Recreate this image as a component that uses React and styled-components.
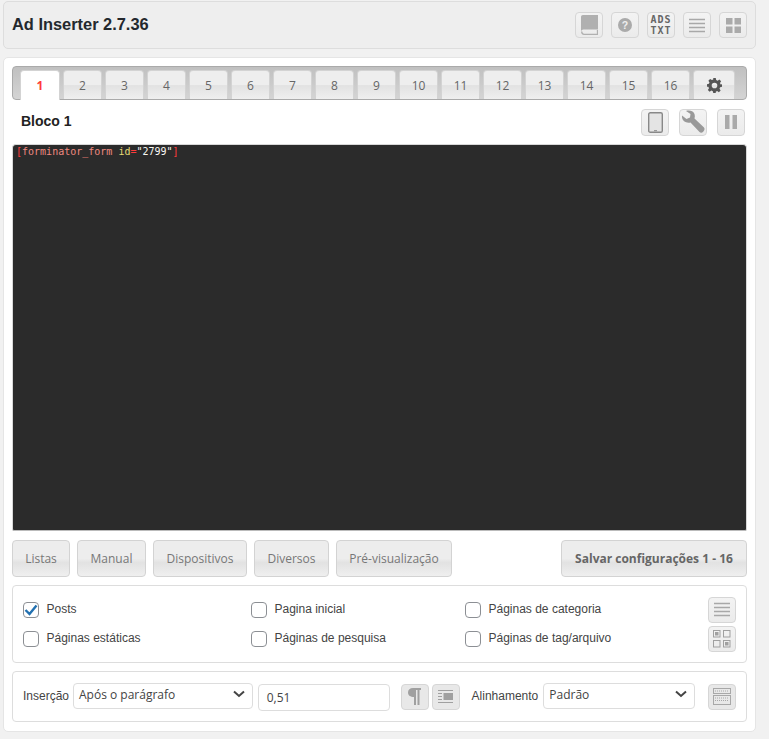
import React from "react";
import styled, { createGlobalStyle } from "styled-components";

const GlobalStyle = createGlobalStyle`
  html, body {
    margin: 0;
    padding: 0;
    background: #f1f1f1;
    font-family: "Liberation Sans", Arial, sans-serif;
    font-size: 12px;
    color: #444;
  }
`;

const Page = styled.div`
  width: 769px;
  height: 739px;
  padding: 1px 13px 0 3px;
  box-sizing: border-box;
  display: flex;
  flex-direction: column;
  gap: 8px;
`;

const Header = styled.header`
  height: 48px;
  box-sizing: border-box;
  background: #eee;
  border: 1px solid #ddd;
  border-radius: 5px;
  display: flex;
  align-items: center;
  justify-content: space-between;
  padding: 0 8px;
`;

const Title = styled.h1`
  margin: 0 0 1px 0;
  font-size: 16.4px;
  font-weight: 700;
  color: #23282d;
`;

const IconRow = styled.div`
  display: flex;
  align-items: center;
  gap: ${(p) => p.$gap || 8}px;
  margin-left: ${(p) => p.$ml || 0}px;
`;

const IconButton = styled.div`
  width: ${(p) => p.$w || 28}px;
  height: ${(p) => p.$h || 26}px;
  margin-left: ${(p) => p.$ml || 0}px;
  box-sizing: border-box;
  border: 1px solid #d6d6d6;
  border-radius: 4px;
  background: ${(p) => p.$fill || "linear-gradient(to bottom, #f3f3f3, #ebebeb)"};
  display: flex;
  align-items: center;
  justify-content: center;
`;

const Main = styled.main`
  height: 675px;
  box-sizing: border-box;
  background: #fff;
  border: 1px solid #e5e5e5;
  border-radius: 5px;
  padding: 8px 8px 0 8px;
`;

const TabBar = styled.div`
  height: 34px;
  box-sizing: border-box;
  border: 1px solid #aaa;
  border-radius: 4px;
  background: linear-gradient(to bottom, #c0c0c0 0, #d4d4d4 100%);
  display: flex;
  align-items: flex-end;
  gap: 3px;
  padding: 0 0 0 7px;
`;

const Tab = styled.div`
  width: ${(p) => p.$w || 39}px;
  height: ${(p) => (p.$active ? 30 : 29)}px;
  margin-bottom: ${(p) => (p.$active ? -1 : 0)}px;
  box-sizing: border-box;
  border: 1px solid #d3d3d3;
  border-bottom: none;
  border-radius: 4px 4px 0 0;
  background: ${(p) =>
    p.$active
      ? "#fff"
      : "linear-gradient(to bottom, #eeeeee 0, #eeeeee 50%, #e2e2e2 52%, #efefef 100%)"};
  color: ${(p) => (p.$active ? "#ff3a3a" : "#666")};
  font-family: "Open Sans", sans-serif;
  font-weight: ${(p) => (p.$active ? 700 : 400)};
  font-size: 12px;
  display: flex;
  align-items: center;
  justify-content: center;
`;

const BlockRow = styled.div`
  height: 44px;
  display: flex;
  align-items: center;
  justify-content: space-between;
  padding: 0 2px 0 9px;
`;

const BlockTitle = styled.h2`
  margin: 0 0 2px 0;
  font-size: 14px;
  font-weight: 700;
  color: #222;
`;

const Editor = styled.pre`
  margin: 0;
  height: 387px;
  box-sizing: border-box;
  background: #2b2b2b;
  border: 1px solid #d8d8d8;
  border-bottom-color: #bbb;
  border-radius: 4px 4px 2px 2px;
  padding: 0 0 0 3px;
  font-family: "DejaVu Sans Mono", monospace;
  font-size: 10px;
  line-height: 13px;
  color: #f8f8f2;
`;

const Tag = styled.span`
  color: ${(p) => p.$c};
`;

const ActionRow = styled.div`
  display: flex;
  gap: 7px;
  margin-top: 9px;
`;

const ActionButton = styled.div`
  height: 37px;
  width: ${(p) => p.$w}px;
  box-sizing: border-box;
  border: 1px solid #d3d3d3;
  border-radius: 4px;
  background: linear-gradient(to bottom, #ededed 0, #ededed 50%, #e2e2e2 62%, #efefef 100%);
  font-family: "Open Sans", sans-serif;
  font-size: 12px;
  font-weight: ${(p) => (p.$bold ? 700 : 400)};
  color: #777;
  display: flex;
  align-items: center;
  justify-content: center;
`;

const SaveButton = styled(ActionButton)`
  margin-left: auto;
  color: #666;
`;

const Box = styled.section`
  box-sizing: border-box;
  height: ${(p) => p.$h}px;
  margin-top: 8px;
  border: 1px solid #ddd;
  border-radius: 4px;
  display: flex;
  align-items: center;
  padding: 0 10px;
`;

const CheckGrid = styled.div`
  display: grid;
  grid-template-columns: 228px 214px 243px;
  grid-auto-rows: 29px;
  align-items: center;
  flex: none;
`;

const Check = styled.label`
  display: flex;
  align-items: center;
  gap: 7.5px;
  font-size: 12px;
  color: #444;
`;

const CheckText = styled.span`
  margin-bottom: 2px;
`;

const CheckBox = styled.span`
  width: 16px;
  height: 16px;
  box-sizing: border-box;
  border: 1px solid #8c8f94;
  border-radius: 4px;
  background: #fff;
  display: flex;
  align-items: center;
  justify-content: center;
`;

const SideIcons = styled.div`
  display: flex;
  flex-direction: column;
  gap: 3px;
`;

const FieldLabel = styled.span`
  font-size: 12px;
  color: #444;
  margin-left: ${(p) => p.$ml || 0}px;
  margin-right: ${(p) => p.$mr || 4}px;
  margin-bottom: 2px;
`;

const Select = styled.div`
  width: ${(p) => p.$w}px;
  height: 26px;
  margin-bottom: 2px;
  box-sizing: border-box;
  border: 1px solid #ddd;
  border-radius: 4px;
  background: #fff;
  padding: 0 7px 3px 5px;
  display: flex;
  align-items: center;
  justify-content: space-between;
  font-family: "Open Sans", sans-serif;
  font-size: 12px;
  color: #444;
`;

const TextInput = styled.div`
  width: 132px;
  height: 27px;
  margin: 1px 0 0 5px;
  box-sizing: border-box;
  border: 1px solid #ddd;
  border-radius: 4px;
  padding: 0 8px;
  display: flex;
  align-items: center;
  font-family: "Open Sans", sans-serif;
  font-size: 12px;
  color: #444;
`;

const Chevron = () => (
  <svg width="12" height="8" viewBox="0 0 12 8">
    <path d="M1 1.5 L6 6 L11 1.5" fill="none" stroke="#444" strokeWidth="2" />
  </svg>
);

const BookIcon = () => (
  <svg width="17" height="20" viewBox="0 0 17 20">
    <path d="M0 17V2C0 .8 .8 0 2 0H17V14.5H2.5C1 14.5 0 15.5 0 17Z" fill="#b0b0b0" />
    <path d="M.7 16.5C.7 18 1.6 19.3 3 19.3H16.5V15" fill="none" stroke="#b0b0b0" strokeWidth="1.3" />
  </svg>
);

const HelpIcon = () => (
  <svg width="14" height="14" viewBox="0 0 14 14">
    <circle cx="7" cy="7" r="7" fill="#aaa" />
    <text x="7" y="11" textAnchor="middle" fontSize="10.5" fontWeight="700" fontFamily="Liberation Sans" fill="#eee">?</text>
  </svg>
);

const ListIcon = () => (
  <svg width="16" height="15" viewBox="0 0 16 15">
    <path d="M0 1.5H16M0 5.5H16M0 9.5H16M0 13.5H16" stroke="#a8a8a8" strokeWidth="1.6" />
  </svg>
);

const GridIcon = () => (
  <svg width="15" height="15" viewBox="0 0 15 15">
    <path d="M0 0H6.5V6.5H0ZM8.5 0H15V6.5H8.5ZM0 8.5H6.5V15H0ZM8.5 8.5H15V15H8.5Z" fill="#aaa" />
  </svg>
);

const AdsTxt = styled.div`
  font-family: "DejaVu Sans Mono", monospace;
  font-size: 10px;
  font-weight: 700;
  line-height: 11px;
  letter-spacing: 1px;
  text-align: center;
  color: #666;
`;

const TabletIcon = () => (
  <svg width="15" height="21" viewBox="0 0 15 21">
    <rect x="0.7" y="0.7" width="13.6" height="19.6" rx="1.6" fill="#e4e4e4" stroke="#888" strokeWidth="1.4" />
    <path d="M6 18.7H9" stroke="#888" />
  </svg>
);

const WrenchIcon = () => (
  <svg width="24" height="24" viewBox="0 0 24 24">
    <path d="M1 5.5 L5.5 9 L9 7.5 L9.5 4 L5 1 C8 0 12 .5 13.5 4 C14 5.5 14 7 13.5 8.5 L23 17.5 C24 18.8 23.5 20.5 22 22 C20.8 23 19.5 23 18.5 22 L9.5 12.5 C7 13 3.5 12.5 2 10 C1.2 8.5 .8 7 1 5.5Z" fill="#999" />
  </svg>
);

const PauseIcon = () => (
  <svg width="12" height="14" viewBox="0 0 12 14">
    <path d="M0 0H4.5V14H0ZM7.5 0H12V14H7.5Z" fill="#aaa" />
  </svg>
);

const GearIcon = () => (
  <svg width="15" height="15" viewBox="0 0 24 24">
    <path
      fillRule="evenodd"
      d="M10 0H14L14.7 3.2L17 4.2L19.8 2.4L22.6 5.2L20.8 8L21.8 10.3L24 10V14L21 14.7L20 17L21.8 19.8L19 22.6L16.2 20.8L14 21.8L14 24H10L9.3 21L7 20L4.2 21.8L1.4 19L3.2 16.2L2.2 14L0 14V10L3 9.3L4 7L2.2 4.2L5 1.4L7.8 3.2L10 2.2ZM12 7.5A4.5 4.5 0 1 0 12 16.5A4.5 4.5 0 1 0 12 7.5Z"
      fill="#555"
    />
  </svg>
);

const MatrixIcon = () => (
  <svg width="18" height="18" viewBox="0 0 18 18">
    <g fill="none" stroke="#a0a0a0">
      <rect x="0.5" y="0.5" width="6.5" height="6.5" />
      <rect x="10.5" y="0.5" width="6.5" height="6.5" />
      <rect x="0.5" y="10.5" width="6.5" height="6.5" />
      <rect x="10.5" y="10.5" width="6.5" height="6.5" />
      <rect x="2.5" y="2.5" width="2.5" height="2.5" fill="#a0a0a0" />
      <rect x="12.5" y="12.5" width="2.5" height="2.5" fill="#a0a0a0" />
    </g>
  </svg>
);

const ParagraphIcon = () => (
  <svg width="13" height="17" viewBox="0 0 13 17">
    <path d="M5 0H13V2H11.5V17H9.5V2H8V17H6V9C2.5 9 0 7.5 0 4.5C0 1.5 2 0 5 0Z" fill="#a0a0a0" />
  </svg>
);

const IndentIcon = () => (
  <svg width="15" height="13" viewBox="0 0 15 13">
    <path d="M0 .5H15M0 12.5H15M0 3.5H4M0 6.5H4M0 9.5H4" stroke="#a0a0a0" />
    <rect x="5.5" y="3" width="9.5" height="7" fill="#a0a0a0" />
  </svg>
);

const KeyboardIcon = () => (
  <svg width="18" height="17" viewBox="0 0 18 17">
    <g fill="none" stroke="#a8a8a8">
      <rect x="0.5" y="0.5" width="17" height="5" />
      <rect x="0.5" y="7.5" width="17" height="9" />
      <path d="M2 3H16" strokeDasharray="1 1" />
      <path d="M2 10H16M2 12.5H16" strokeDasharray="1 1" />
    </g>
  </svg>
);

const tabs = ["2", "3", "4", "5", "6", "7", "8", "9", "10", "11", "12", "13", "14", "15", "16"];

const actions = [
  ["Listas", 58],
  ["Manual", 69],
  ["Dispositivos", 94],
  ["Diversos", 75],
  ["Pré-visualização", 116],
];

const checks = [
  ["Posts", true],
  ["Pagina inicial"],
  ["Páginas de categoria"],
  ["Páginas estáticas"],
  ["Páginas de pesquisa"],
  ["Páginas de tag/arquivo"],
];

export default function App() {
  return (
    <>
      <GlobalStyle />
      <Page>
        <Header>
          <Title>Ad Inserter 2.7.36</Title>
          <IconRow>
            <IconButton><BookIcon /></IconButton>
            <IconButton><HelpIcon /></IconButton>
            <IconButton><AdsTxt>ADS<br />TXT</AdsTxt></IconButton>
            <IconButton><ListIcon /></IconButton>
            <IconButton><GridIcon /></IconButton>
          </IconRow>
        </Header>
        <Main>
          <TabBar>
            <Tab $active $w={40}>1</Tab>
            {tabs.map((t) => (
              <Tab key={t}>{t}</Tab>
            ))}
            <Tab $w={42}><GearIcon /></Tab>
          </TabBar>
          <BlockRow>
            <BlockTitle>Bloco 1</BlockTitle>
            <IconRow $gap={10}>
              <IconButton $h={27}><TabletIcon /></IconButton>
              <IconButton $h={27}><WrenchIcon /></IconButton>
              <IconButton $h={27}><PauseIcon /></IconButton>
            </IconRow>
          </BlockRow>
          <Editor>
            <Tag $c="#ff3b3b">[</Tag>
            <Tag $c="#f08a80">forminator_form</Tag>{" "}
            <Tag $c="#e6db74">id</Tag>
            <Tag $c="#ff3b3b">=</Tag>"2799"
            <Tag $c="#ff3b3b">]</Tag>
          </Editor>
          <ActionRow>
            {actions.map(([label, w]) => (
              <ActionButton key={label} $w={w}>{label}</ActionButton>
            ))}
            <SaveButton $w={186} $bold>Salvar configurações 1 - 16</SaveButton>
          </ActionRow>
          <Box $h={78}>
            <CheckGrid>
              {checks.map(([label, on]) => (
                <Check key={label}>
                  <CheckBox>
                    {on && (
                      <svg width="14" height="12" viewBox="0 0 14 12">
                        <path d="M1.5 6 L5.5 10 L12.5 1.5" fill="none" stroke="#2271b1" strokeWidth="2.4" />
                      </svg>
                    )}
                  </CheckBox>
                  <CheckText>{label}</CheckText>
                </Check>
              ))}
            </CheckGrid>
            <SideIcons>
              <IconButton $h={26}><ListIcon /></IconButton>
              <IconButton $h={26}><MatrixIcon /></IconButton>
            </SideIcons>
          </Box>
          <Box $h={51}>
            <FieldLabel>Inserção</FieldLabel>
            <Select $w={180}>Após o parágrafo<Chevron /></Select>
            <TextInput>0,51</TextInput>
            <IconRow $gap={3} $ml={11}>
              <IconButton $fill="#e8e8e8"><ParagraphIcon /></IconButton>
              <IconButton $fill="#e8e8e8"><IndentIcon /></IconButton>
            </IconRow>
            <FieldLabel $ml={12} $mr={5}>Alinhamento</FieldLabel>
            <Select $w={152}>Padrão<Chevron /></Select>
            <IconButton $fill="#e8e8e8" $ml={13}><KeyboardIcon /></IconButton>
          </Box>
        </Main>
      </Page>
    </>
  );
}
